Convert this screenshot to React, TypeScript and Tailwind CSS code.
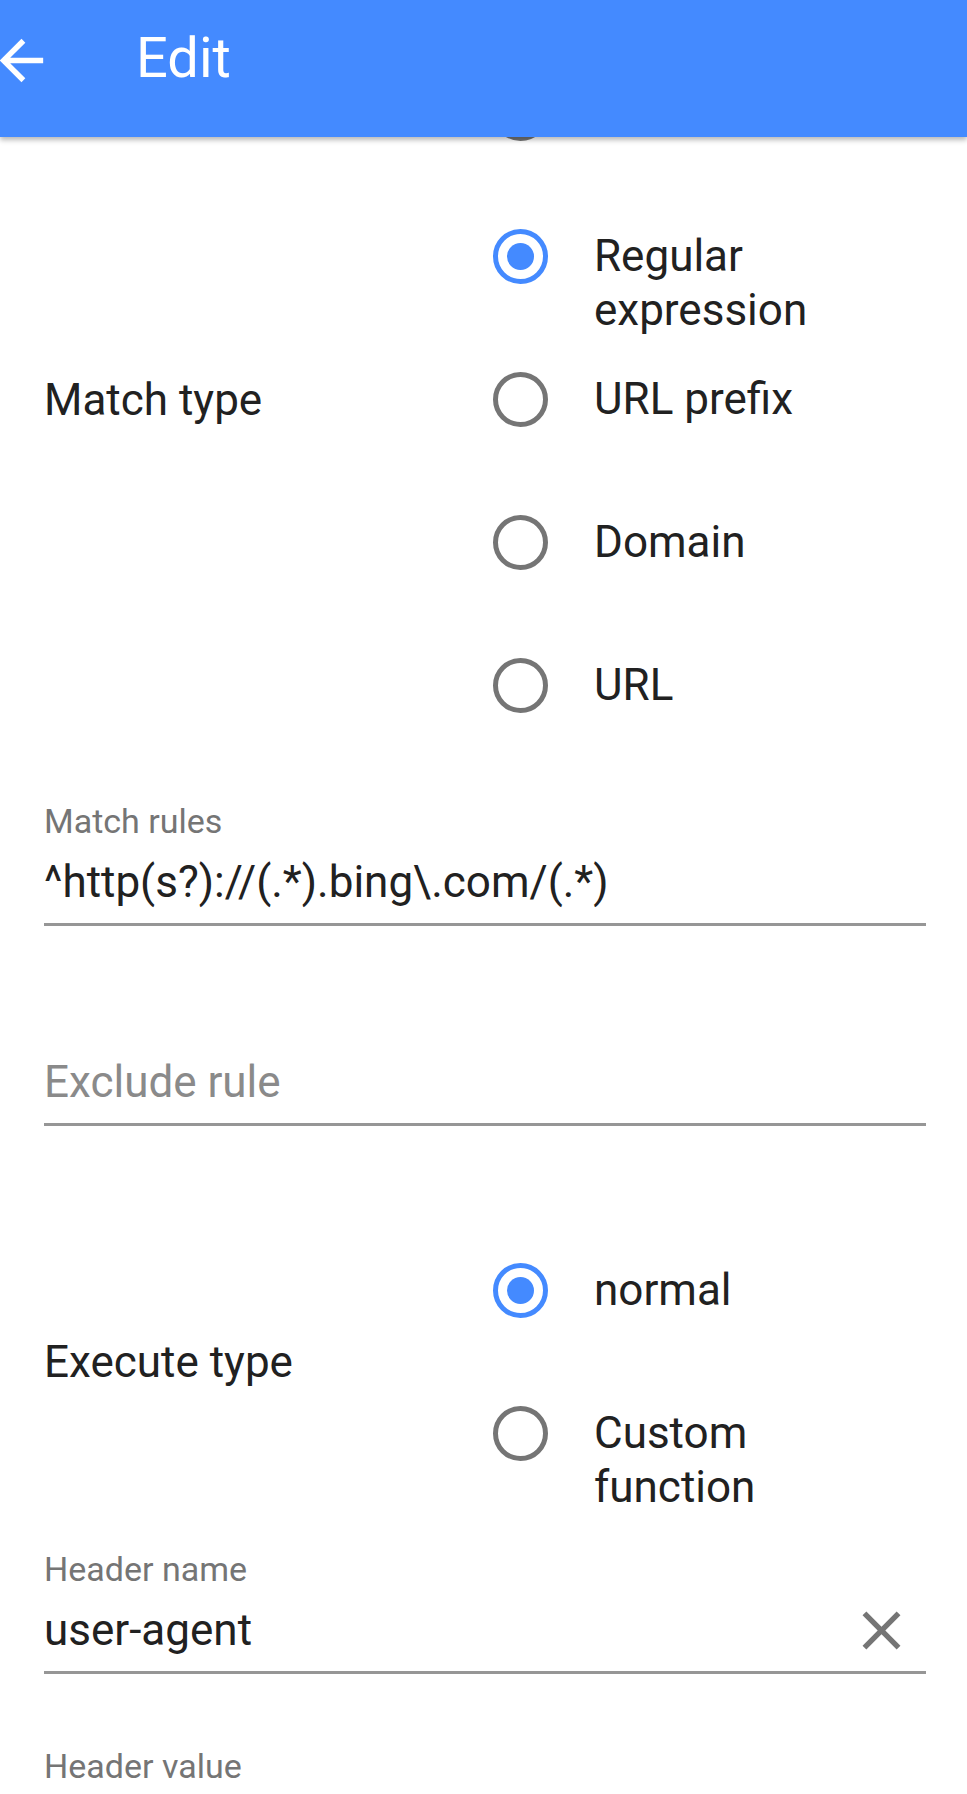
import React from 'react';

const font = { fontFamily: 'Roboto, "Noto Sans", sans-serif' };

type Opt = { label: string; checked?: boolean };

const Radio: React.FC<{ checked?: boolean }> = ({ checked }) => (
  <div
    className={`shrink-0 w-[55px] h-[55px] rounded-full border-[5px] flex items-center justify-center ${
      checked ? 'border-[#448aff]' : 'border-[#757575]'
    }`}
  >
    {checked && <div className="w-[27px] h-[27px] rounded-full bg-[#448aff]" />}
  </div>
);

const RadioGroup: React.FC<{ title: string; options: Opt[] }> = ({ title, options }) => (
  <div className="grid grid-cols-2">
    <div className="flex items-center text-[44px] leading-[54px] text-[#212121]">{title}</div>
    <div className="flex flex-col">
      {options.map((o, i) => (
        <div key={i} className="h-[143px] flex items-start pt-[44px] pl-[8px]">
          <Radio checked={o.checked} />
          <div className="ml-[46px] max-w-[290px] text-[44px] leading-[54px] text-[#212121]">{o.label}</div>
        </div>
      ))}
    </div>
  </div>
);

const Field: React.FC<{ label: string; value?: string; placeholder?: string; floating?: boolean; clear?: boolean; className?: string }> = ({
  label,
  value,
  placeholder,
  floating,
  clear,
  className,
}) => (
  <div className={className}>
    <div className="h-[40px] text-[34px] leading-[40px] text-[#757575]">{floating ? label : ''}</div>
    <div className="mt-[14px] flex items-center justify-between h-[54px]">
      <span className={`text-[44px] leading-[54px] whitespace-nowrap ${value ? 'text-[#212121]' : 'text-[#8a8a8a]'}`}>
        {value || placeholder}
      </span>
      {clear && (
        <svg width="65" height="65" viewBox="0 0 24 24" className="mr-[12px]" fill="#757575">
          <path d="M19 6.41L17.59 5 12 10.59 6.41 5 5 6.41 10.59 12 5 17.59 6.41 19 12 13.41 17.59 19 19 17.59 13.41 12z" />
        </svg>
      )}
    </div>
    <div className="mt-[14px] h-[3px] bg-[#969696]" />
  </div>
);

export default function App() {
  return (
    <div className="relative w-[967px] h-[1794px] overflow-hidden bg-white" style={font}>
      {/* top bar over scrolled content */}
      <div className="absolute top-0 left-0 right-0 z-10 h-[137px] bg-[#448aff] shadow-[0_3px_5px_rgba(0,0,0,0.28)] flex items-center">
        <svg width="65" height="65" viewBox="0 0 24 24" className="-ml-[11px] -mt-[16px]" fill="#ffffff">
          <path d="M20 11H7.83l5.59-5.59L12 4l-8 8 8 8 1.41-1.41L7.83 13H20v-2z" />
        </svg>
        <div className="ml-[82px] -mt-[22px] text-[56px] leading-[64px] text-white">Edit</div>
      </div>

      <div className="pt-[42px] pl-[44px] pr-[41px]">
        <RadioGroup
          title="Match type"
          options={[
            { label: '' },
            { label: 'Regular expression', checked: true },
            { label: 'URL prefix' },
            { label: 'Domain' },
            { label: 'URL' },
          ]}
        />

        <Field className="mt-[44px]" label="Match rules" value="^http(s?)://(.*).bing\.com/(.*)" floating />
        <Field className="mt-[75px]" label="Exclude rule" placeholder="Exclude rule" />

        <div className="mt-[93px]">
          <RadioGroup
            title="Execute type"
            options={[{ label: 'normal', checked: true }, { label: 'Custom function' }]}
          />
        </div>

        <Field className="mt-[44px]" label="Header name" value="user-agent" floating clear />
        <Field className="mt-[72px]" label="Header value" floating />
      </div>
    </div>
  );
}
